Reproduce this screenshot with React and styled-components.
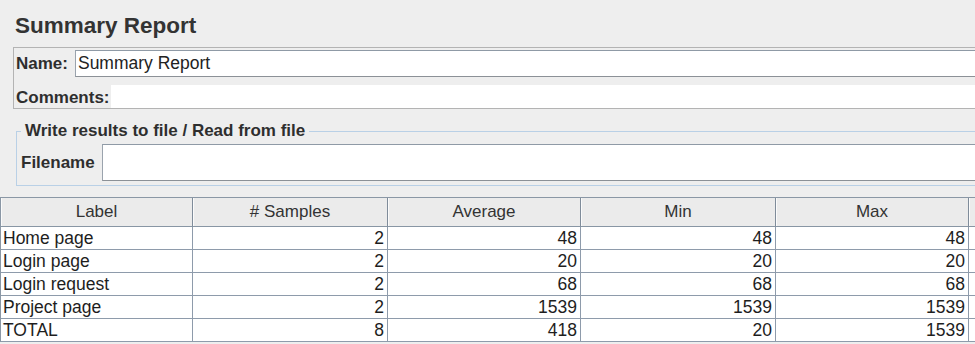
import React from 'react';
import styled, { createGlobalStyle } from 'styled-components';

const Global = createGlobalStyle`
  html, body { margin: 0; padding: 0; background: #eeeeee; overflow: hidden; }
  body { font-family: "Liberation Sans", Arial, sans-serif; color: #222; }
`;

const Page = styled.div`
  width: 975px;
  height: 344px;
  overflow: hidden;
  background: #eeeeee;
`;

const Title = styled.h1`
  margin: 0;
  padding: 13px 0 0 15px;
  font-size: 22.5px;
  line-height: 25px;
  font-weight: 700;
  color: #333;
`;

const NamePanel = styled.div`
  margin: 9px -8px 0 13px;
  border: 1px solid #b3b3b3;
  padding: 2px 0 0 2px;
`;

const Row = styled.div`
  display: flex;
  align-items: center;
  gap: ${(p) => p.$gap || 0}px;
  margin-top: ${(p) => p.$top || 0}px;
  height: ${(p) => p.$h}px;
`;

const Label = styled.label`
  font-size: 17px;
  font-weight: 700;
  color: #2e2e2e;
  white-space: nowrap;
  padding-top: ${(p) => p.$nudge || 0}px;
`;

const TextField = styled.div`
  flex: 1;
  align-self: stretch;
  background: #fff;
  border: 1px solid #9aa3ad;
  border-top-color: #8f9aa6;
  border-bottom-color: #8c9197;
  border-right: none;
  padding-left: 2px;
  display: flex;
  align-items: center;
  font-size: 17.5px;
  color: #222;
`;

const TextArea = styled.div`
  flex: 1;
  align-self: stretch;
  background: #fff;
  margin-left: 1px;
`;

const Group = styled.fieldset`
  margin: 12px -8px 0 16px;
  min-width: 0;
  padding: 3px 0 4px 4px;
  border: 1px solid #b9d0e6;
`;

const Legend = styled.legend`
  padding: 0 4px;
  font-size: 17px;
  font-weight: 700;
  line-height: 20px;
  color: #2e2e2e;
`;

const Table = styled.div`
  margin-top: 11px;
  width: 1165px;
  display: grid;
  grid-template-columns: 192px 195px 193px 195px 193px 197px;
  border-top: 1px solid #8a97a5;
  border-left: 1px solid #8a97a5;
`;

const HeadCell = styled.div`
  height: 28px;
  background: #ebebeb;
  border-right: 1px solid #7f8c9a;
  border-bottom: 1px solid #8896a4;
  box-shadow: inset 1px 0 0 #fbfbfb;
  display: flex;
  align-items: center;
  justify-content: center;
  font-size: 17px;
  color: #333;
  white-space: nowrap;
`;

const Cell = styled.div`
  height: 22px;
  line-height: 22px;
  background: #fff;
  border-right: 1px solid #8e9bab;
  border-bottom: 1px solid #8e9bab;
  padding: 0 ${(p) => (p.$num ? 3 : 0)}px 0 ${(p) => (p.$num ? 0 : 2)}px;
  text-align: ${(p) => (p.$num ? 'right' : 'left')};
  font-size: 17.5px;
  color: #1e1e1e;
  white-space: nowrap;
  overflow: hidden;
`;

const headers = ['Label', '# Samples', 'Average', 'Min', 'Max', ''];
const rows = [
  ['Home page', 2, 48, 48, 48, ''],
  ['Login page', 2, 20, 20, 20, ''],
  ['Login request', 2, 68, 68, 68, ''],
  ['Project page', 2, 1539, 1539, 1539, ''],
  ['TOTAL', 8, 418, 20, 1539, ''],
];

export default function App() {
  return (
    <Page>
      <Global />
      <Title>Summary Report</Title>
      <NamePanel>
        <Row $h={27} $gap={7}>
          <Label $nudge={1}>Name:</Label>
          <TextField>Summary Report</TextField>
        </Row>
        <Row $h={23} $top={8}>
          <Label $nudge={2}>Comments:</Label>
          <TextArea />
        </Row>
      </NamePanel>
      <Group>
        <Legend>Write results to file / Read from file</Legend>
        <Row $h={37} $gap={7}>
          <Label>Filename</Label>
          <TextField />
        </Row>
      </Group>
      <Table>
        {headers.map((h, i) => (
          <HeadCell key={i}>{h}</HeadCell>
        ))}
        {rows.map((r) =>
          r.map((v, i) => (
            <Cell key={r[0] + i} $num={i > 0}>
              {v}
            </Cell>
          ))
        )}
      </Table>
    </Page>
  );
}
